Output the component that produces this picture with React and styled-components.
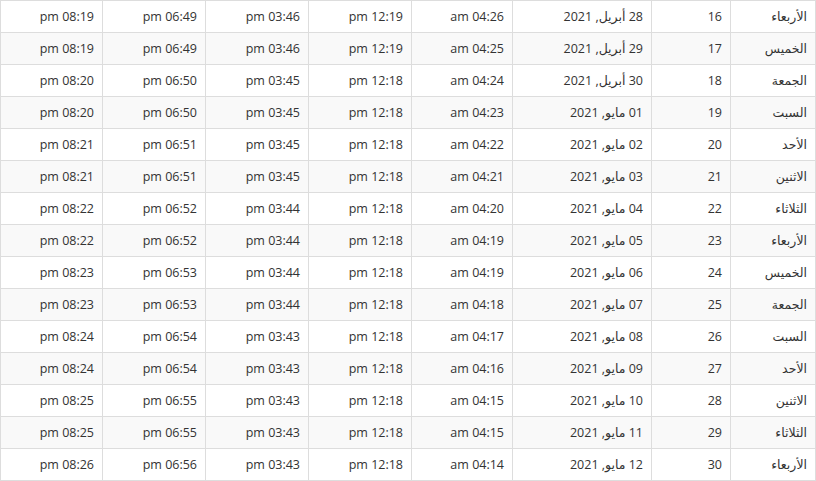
import React from "react";
import styled, { createGlobalStyle } from "styled-components";

const rows = [
  ["الأربعاء", 16, "28 أبريل, 2021", "04:26", "12:19", "03:46", "06:49", "08:19"],
  ["الخميس", 17, "29 أبريل, 2021", "04:25", "12:19", "03:46", "06:49", "08:19"],
  ["الجمعة", 18, "30 أبريل, 2021", "04:24", "12:18", "03:45", "06:50", "08:20"],
  ["السبت", 19, "01 مايو, 2021", "04:23", "12:18", "03:45", "06:50", "08:20"],
  ["الأحد", 20, "02 مايو, 2021", "04:22", "12:18", "03:45", "06:51", "08:21"],
  ["الاثنين", 21, "03 مايو, 2021", "04:21", "12:18", "03:45", "06:51", "08:21"],
  ["الثلاثاء", 22, "04 مايو, 2021", "04:20", "12:18", "03:44", "06:52", "08:22"],
  ["الأربعاء", 23, "05 مايو, 2021", "04:19", "12:18", "03:44", "06:52", "08:22"],
  ["الخميس", 24, "06 مايو, 2021", "04:19", "12:18", "03:44", "06:53", "08:23"],
  ["الجمعة", 25, "07 مايو, 2021", "04:18", "12:18", "03:44", "06:53", "08:23"],
  ["السبت", 26, "08 مايو, 2021", "04:17", "12:18", "03:43", "06:54", "08:24"],
  ["الأحد", 27, "09 مايو, 2021", "04:16", "12:18", "03:43", "06:54", "08:24"],
  ["الاثنين", 28, "10 مايو, 2021", "04:15", "12:18", "03:43", "06:55", "08:25"],
  ["الثلاثاء", 29, "11 مايو, 2021", "04:15", "12:18", "03:43", "06:55", "08:25"],
  ["الأربعاء", 30, "12 مايو, 2021", "04:14", "12:18", "03:43", "06:56", "08:26"],
];

// widths from right to left (rtl table)
const widths = [85, 79, 139, 101, 103, 103, 103, 102];

export default function App() {
  return (
    <>
      <GlobalStyle />
      <Table>
        <colgroup>
          {widths.map((w, i) => (
            <col key={i} style={{ width: w }} />
          ))}
        </colgroup>
        <tbody>
          {rows.map((r, i) => (
            <Row key={i} $striped={i % 2 === 1}>
              <Cell>{r[0]}</Cell>
              <Cell>{r[1]}</Cell>
              <Cell>{r[2]}</Cell>
              <Cell>{r[3]} am</Cell>
              <Cell>{r[4]} pm</Cell>
              <Cell>{r[5]} pm</Cell>
              <Cell>{r[6]} pm</Cell>
              <Cell>{r[7]} pm</Cell>
            </Row>
          ))}
        </tbody>
      </Table>
    </>
  );
}

// - Styled Components - //
const GlobalStyle = createGlobalStyle`
  body {
    margin: 0;
    background: #fff;
    font-family: "Open Sans", "DejaVu Sans", sans-serif;
  }
`;

const Table = styled.table`
  direction: rtl;
  width: 816px;
  table-layout: fixed;
  border-collapse: collapse;
  font-size: 12.5px;
  color: #333;
`;

const Row = styled.tr`
  background: ${(p) => (p.$striped ? "#f9f9f9" : "#fff")};
`;

const Cell = styled.td`
  height: 31px;
  padding: 0 8px;
  border: 1px solid #ddd;
  text-align: right;
  white-space: nowrap;
  line-height: 18px;
`;
